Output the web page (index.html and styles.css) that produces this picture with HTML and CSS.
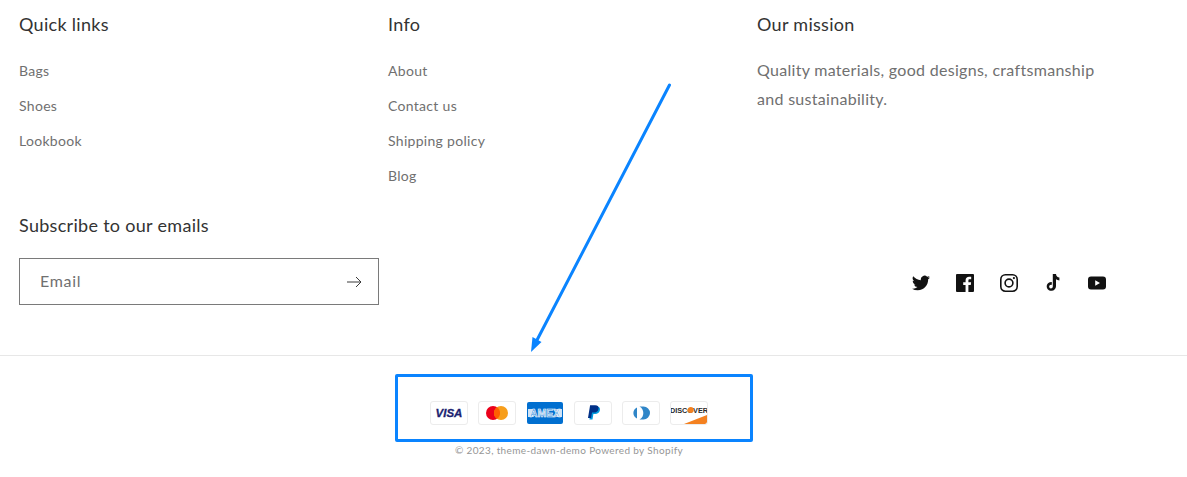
FILE: index.html
```html
<!DOCTYPE html>
<html lang="en">

<head>
  <meta charset="UTF-8" />
  <title>Footer</title>
  <link rel="stylesheet" href="styles.css">
</head>

<body>
  <footer class="footer">
    <div class="blocks">
      <div class="block">
        <h2 class="block-title">Quick links</h2>
        <ul class="links">
          <li><a href="#">Bags</a></li>
          <li><a href="#">Shoes</a></li>
          <li><a href="#">Lookbook</a></li>
        </ul>
      </div>
      <div class="block">
        <h2 class="block-title">Info</h2>
        <ul class="links">
          <li><a href="#">About</a></li>
          <li><a href="#">Contact us</a></li>
          <li><a href="#">Shipping policy</a></li>
          <li><a href="#">Blog</a></li>
        </ul>
      </div>
      <div class="block">
        <h2 class="block-title">Our mission</h2>
        <p class="mission">Quality materials, good designs, craftsmanship and sustainability.</p>
      </div>
    </div>

    <div class="newsletter-row">
      <div class="newsletter">
        <h2 class="block-title">Subscribe to our emails</h2>
        <div class="email-field">
          <span class="email-label">Email</span>
          <svg class="email-arrow" viewBox="0 0 16 12" width="16" height="12" fill="none" stroke="#3a3a3a" stroke-width="1">
            <path d="M1 6h14M10 1l5 5-5 5" />
          </svg>
        </div>
      </div>
      <ul class="social">
        <li>
          <svg viewBox="0 0 18 18" width="18" height="18" fill="#121212">
            <path d="M18 3.4c-.66.3-1.37.5-2.12.59.76-.46 1.35-1.18 1.62-2.04-.71.42-1.5.73-2.34.9A3.69 3.69 0 0 0 8.88 6.2 10.47 10.47 0 0 1 1.25 2.34a3.69 3.69 0 0 0 1.14 4.93c-.6-.02-1.17-.18-1.67-.46v.05a3.69 3.69 0 0 0 2.96 3.62c-.54.15-1.11.17-1.67.06a3.7 3.7 0 0 0 3.45 2.56A7.41 7.41 0 0 1 0 14.63 10.45 10.45 0 0 0 5.66 16.3c6.79 0 10.5-5.63 10.5-10.5l-.01-.48A7.5 7.5 0 0 0 18 3.4z" />
          </svg>
        </li>
        <li>
          <svg viewBox="0 0 18 18" width="18" height="18" fill="#121212">
            <path d="M1 0h16a1 1 0 0 1 1 1v16a1 1 0 0 1-1 1h-4.6v-7h2.35l.35-2.7h-2.7V6.55c0-.78.22-1.31 1.35-1.31h1.44V2.82a19 19 0 0 0-2.1-.11c-2.08 0-3.5 1.27-3.5 3.6V8.3H7.2V11h2.35v7H1a1 1 0 0 1-1-1V1a1 1 0 0 1 1-1z" />
          </svg>
        </li>
        <li>
          <svg viewBox="0 0 18 18" width="18" height="18" fill="none" stroke="#121212" stroke-width="1.6">
            <rect x="0.8" y="0.8" width="16.4" height="16.4" rx="4.6" />
            <circle cx="9" cy="9" r="3.9" />
            <circle cx="13.9" cy="4.1" r="1.1" fill="#121212" stroke="none" />
          </svg>
        </li>
        <li>
          <svg viewBox="0 0 18 18" width="18" height="18" fill="#121212">
            <path d="M9.3 0h2.7c.2 2.1 1.4 3.4 3.4 3.6v2.8c-1.3 0-2.4-.4-3.4-1.1v6.6c0 3.8-4 6.1-7.1 4.3-3.6-2.1-2.7-8.4 2.9-8.2v2.9c-2.5-.3-3.1 1.7-2.3 2.8 1 1.3 3.3.7 3.3-1.3V0z" />
          </svg>
        </li>
        <li>
          <svg viewBox="0 0 18 14" width="18" height="14" fill="#121212">
            <path fill-rule="evenodd" d="M3 .5h12a3 3 0 0 1 3 3v7a3 3 0 0 1-3 3H3a3 3 0 0 1-3-3v-7a3 3 0 0 1 3-3zM7.2 4.2v5.6L12 7 7.2 4.2z" />
          </svg>
        </li>
      </ul>
    </div>

    <div class="footer-bottom">
      <ul class="payments">
        <li class="pay">
          <svg viewBox="0 0 38 24" width="38" height="24">
            <text x="19" y="16" class="visa-text">VISA</text>
          </svg>
        </li>
        <li class="pay">
          <svg viewBox="0 0 38 24" width="38" height="24">
            <circle cx="15" cy="12" r="7" fill="#eb001b" />
            <circle cx="23" cy="12" r="7" fill="#f79e1b" />
            <path d="M19 6.2a7 7 0 0 1 0 11.6 7 7 0 0 1 0-11.6z" fill="#ff5f00" />
          </svg>
        </li>
        <li class="pay pay-amex">
          <svg viewBox="0 0 38 24" width="38" height="24">
            <path d="M2 8h6l-2 4 2 4H2zM36 8h-6l2 4-2 4h6z" fill="#cfe3f6" />
            <text x="19" y="15.800" class="amex-text">AMEX</text>
          </svg>
        </li>
        <li class="pay">
          <svg viewBox="0 0 38 24" width="38" height="24">
            <path d="M15.400 18.500 17.500 5.500h5c2.800 0 3.900 1.500 3.400 3.700-.6 2.600-2.400 3.700-4.800 3.700h-1.700l-.9 5.600z" fill="#009cde" />
            <path d="M14 17 16.100 4.200h5c2.800 0 3.900 1.500 3.400 3.700-.6 2.600-2.400 3.700-4.800 3.700H18l-.9 5.400z" fill="#003087" />
          </svg>
        </li>
        <li class="pay">
          <svg viewBox="0 0 38 24" width="38" height="24">
            <path d="M15 6.500v11a6 6 0 0 1 0-11z" fill="#3086c8" />
            <path d="M17.500 5.500h4a6.500 6.500 0 0 1 0 13h-4c2.800-1.500 3.800-4 3.800-6.500s-1-5-3.800-6.500z" fill="#3086c8" />
          </svg>
        </li>
        <li class="pay">
          <svg viewBox="0 0 38 24" width="38" height="24">
            <path d="M14 23 37 14v7a2 2 0 0 1-2 2z" fill="#f48120" />
            <text x="19" y="11.500" class="discover-text">DISCOVER</text>
            <circle cx="20.800" cy="9" r="2.900" fill="#f48120" />
          </svg>
        </li>
      </ul>
      <p class="copyright">© 2023, theme-dawn-demo Powered by Shopify</p>
    </div>

    <!-- annotation drawn on top of the screenshot -->
    <div class="note-box"></div>
    <svg class="note-arrow" viewBox="0 0 1187 477" width="1187" height="477">
      <path d="M669.500 85 536 342" fill="none" stroke="#0a84ff" stroke-width="3" stroke-linecap="round" />
      <path d="M531 352 532.500 337 541.500 342z" fill="#0a84ff" />
    </svg>
  </footer>
</body>

</html>
```

FILE: styles.css
```css
:root {
  --text: #121212;
  --muted: #707070;
  --blue: #0a84ff;
}

html,
body {
  margin: 0;
  padding: 0;
  background-color: #fff;
}

body {
  font-family: "Lato", "Noto Sans", sans-serif;
  color: var(--text);
  letter-spacing: 0.3px;
}

ul {
  list-style: none;
  margin: 0;
  padding: 0;
}

.footer {
  position: relative;
  height: 477px;
  overflow: hidden;
}

.blocks {
  display: grid;
  grid-template-columns: 369px 369px 1fr;
  padding: 13px 0 0 19px;
  height: 211px;
  box-sizing: border-box;
}

.block-title {
  margin: 0;
  font-size: 18px;
  line-height: 23px;
  font-weight: 400;
  color: #333;
}

.links {
  margin-top: 17px;
}

.links li {
  height: 35px;
  line-height: 35px;
  font-size: 14px;
  color: var(--muted);
}

.links a {
  color: inherit;
  text-decoration: none;
}

.mission {
  margin: 19px 0 0;
  width: 350px;
  font-size: 16px;
  line-height: 29px;
  color: var(--muted);
}

.newsletter-row {
  display: flex;
  justify-content: space-between;
  align-items: flex-end;
  padding: 0 81px 50px 19px;
  height: 145px;
  box-sizing: border-box;
  border-bottom: 1px solid #e7e7e7;
}

.newsletter .block-title {
  margin-bottom: 21px;
}

.email-field {
  display: flex;
  align-items: center;
  justify-content: space-between;
  width: 360px;
  height: 47px;
  box-sizing: border-box;
  padding: 0 16px 0 20px;
  border: 1px solid #7a7a7a;
}

.email-label {
  padding-bottom: 3px;
  font-size: 16px;
  letter-spacing: 0.7px;
  color: var(--muted);
}

.social {
  display: flex;
  align-items: center;
  height: 44px;
  gap: 26px;
}

.social li {
  display: flex;
}

.footer-bottom {
  display: flex;
  flex-direction: column;
  align-items: center;
  padding: 45px 49px 0 0;
}

.payments {
  display: flex;
  gap: 10px;
}

.pay {
  width: 38px;
  height: 24px;
  box-sizing: border-box;
  border: 1px solid #ececec;
  border-radius: 3px;
  background-color: #fff;
  display: flex;
  align-items: center;
  justify-content: center;
  overflow: hidden;
}

.pay svg {
  flex: none;
}

.pay-amex {
  background-color: #016fd0;
  background-clip: padding-box;
  border-color: transparent;
}

.visa-text {
  font-family: "Liberation Sans", sans-serif;
  font-size: 11.500px;
  font-weight: 700;
  font-style: italic;
  letter-spacing: 0;
  text-anchor: middle;
  fill: #1a1f71;
  stroke: #1a1f71;
  stroke-width: 0.3px;
}

.amex-text {
  font-family: "Liberation Sans", sans-serif;
  font-size: 10.500px;
  font-weight: 700;
  letter-spacing: 0;
  text-anchor: middle;
  fill: #4b97dd;
  stroke: #fff;
  stroke-width: 0.6px;
}

.discover-text {
  font-family: "Liberation Sans", sans-serif;
  font-size: 7.300px;
  font-weight: 700;
  letter-spacing: 0;
  text-anchor: middle;
  fill: #2a2a2a;
}

.copyright {
  margin: 18px 0 0;
  font-size: 10px;
  line-height: 14px;
  letter-spacing: 0.36px;
  color: #969696;
}

.note-box {
  position: absolute;
  left: 395px;
  top: 374px;
  width: 358px;
  height: 68px;
  box-sizing: border-box;
  border: 3px solid var(--blue);
  border-radius: 2px;
}

.note-arrow {
  position: absolute;
  left: 0;
  top: 0;
  pointer-events: none;
}
```
